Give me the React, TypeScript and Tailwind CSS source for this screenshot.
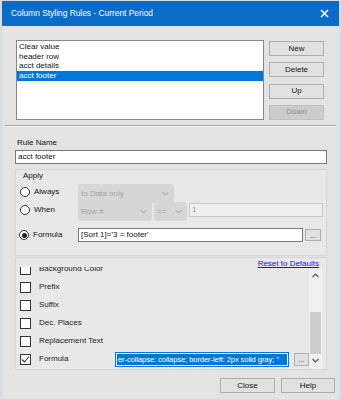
import React from "react";

const F = { fontFamily: '"Liberation Sans", Arial, sans-serif' };

function Btn({ label, disabled, w = "w-[55px]" }: { label: string; disabled?: boolean; w?: string }) {
  return (
    <div
      className={`${w} h-[15px] flex items-center justify-center text-[8px] border ${
        disabled ? "bg-[#cccccc] border-[#bfbfbf] text-[#8a8a8a]" : "bg-[#e1e1e1] border-[#adadad] text-[#111]"
      }`}
    >
      {label}
    </div>
  );
}

function Radio({ checked }: { checked?: boolean }) {
  return (
    <div className="w-[10px] h-[10px] rounded-full border border-[#333] bg-white flex items-center justify-center shrink-0">
      {checked && <div className="w-[5px] h-[5px] rounded-full bg-[#222]" />}
    </div>
  );
}

function Check({ checked }: { checked?: boolean }) {
  return (
    <div className="w-[11px] h-[11px] border border-[#333] bg-white flex items-center justify-center shrink-0">
      {checked && (
        <svg width="9" height="9" viewBox="0 0 9 9">
          <path d="M1 4.5 L3.5 7 L8 1.5" fill="none" stroke="#333" strokeWidth="1.1" />
        </svg>
      )}
    </div>
  );
}

function Chevron() {
  return (
    <svg width="7" height="5" viewBox="0 0 7 5">
      <path d="M0.5 1 L3.5 4 L6.5 1" fill="none" stroke="#9a9a9a" strokeWidth="1" />
    </svg>
  );
}

function Combo({ label, w }: { label: string; w: string }) {
  return (
    <div className={`${w} h-[19px] rounded-[3px] bg-[#d6d6d6] flex items-center justify-between pl-[3px] pr-[5px] text-[8px] text-[#a3a3a3]`}>
      <span>{label}</span>
      <Chevron />
    </div>
  );
}

function CheckRow({ label, checked, children }: { label: string; checked?: boolean; children?: React.ReactNode }) {
  return (
    <div className="h-[18px] flex items-center">
      <div className="w-[21px] pl-[4px] flex items-center">
        <Check checked={checked} />
      </div>
      <span className="text-[8px] text-[#222] ml-[2px] w-[76px] whitespace-nowrap">{label}</span>
      {children}
    </div>
  );
}

export default function App() {
  return (
    <div style={F} className="w-[341px] h-[400px] bg-[#d4dbe3] p-[1px] flex flex-col overflow-hidden">
      <div className="h-[25px] mx-[1px] bg-[#0b6cc7] flex items-center justify-between pl-[9px] pr-[10px]">
        <span className="text-white text-[8.4px]">Column Styling Rules - Current Period</span>
        <svg width="9" height="9" viewBox="0 0 9 9">
          <path d="M1 1 L8 8 M8 1 L1 8" stroke="white" strokeWidth="1.6" />
        </svg>
      </div>
      <div className="flex-1 bg-[#e3e3e3] mx-[1px] flex flex-col">
        {/* top list section */}
        <div className="flex pt-[14px] pl-[14px]">
          <div className="w-[248px] h-[80px] bg-white border border-[#828790] text-[8px] text-[#111] pt-[1px]">
            <div className="h-[9.7px] leading-[9.7px] pl-[2px]">Clear value</div>
            <div className="h-[9.7px] leading-[9.7px] pl-[2px]">header row</div>
            <div className="h-[9.7px] leading-[9.7px] pl-[2px]">acct details</div>
            <div className="h-[9.7px] leading-[9.7px] pl-[2px] bg-[#0078d7] text-white">acct footer</div>
          </div>
          <div className="ml-[5px] flex flex-col gap-[6.3px] pt-[1px]">
            <Btn label="New" />
            <Btn label="Delete" />
            <Btn label="Up" />
            <Btn label="Down" disabled />
          </div>
        </div>
        {/* separator */}
        <div className="mx-[3px] mt-[5px] border-t border-[#a5a5a5] border-b border-b-[#f7f7f7]" />
        {/* rule name */}
        <div className="pl-[13px] pr-[12px] mt-[11px]">
          <div className="text-[8px] text-[#111] pl-[2px] h-[10px] leading-[10px]">Rule Name</div>
          <div className="mt-[2px] h-[14px] bg-white border border-[#7a7a7a] text-[8px] text-[#111] flex items-center pl-[2px]">
            acct footer
          </div>
        </div>
        {/* apply group */}
        <div className="ml-[13px] mr-[12px] mt-[5px] h-[87px] border border-[#d6d6d6] bg-[#e8e8e8]">
          <div className="text-[8px] text-[#111] pl-[7px] pt-[1px] h-[11px] leading-[10px]">Apply</div>
          <div className="flex">
            <div className="flex flex-col w-[62px] pl-[4px]">
              <div className="h-[18px] flex items-center mt-[2px]">
                <Radio />
                <span className="text-[8px] text-[#111] ml-[4px]">Always</span>
              </div>
              <div className="h-[17px] flex items-center">
                <Radio />
                <span className="text-[8px] text-[#111] ml-[4px]">When</span>
              </div>
            </div>
            <div className="flex flex-col pt-[3px]">
              <Combo label="to Data only" w="w-[96px]" />
              <div className="flex items-start gap-[2px] -mt-[1px]">
                <Combo label="Row #" w="w-[74px]" />
                <Combo label="==" w="w-[33px]" />
                <div className="w-[134px] h-[14px] mt-[1px] bg-[#efefef] border border-[#c8c8c8] text-[8px] text-[#9a9a9a] flex items-center pl-[2px]">
                  1
                </div>
              </div>
            </div>
          </div>
          <div className="flex items-center mt-[7px] pl-[3px]">
            <div className="w-[59px] flex items-center">
              <Radio checked />
              <span className="text-[8px] text-[#111] ml-[4px]">Formula</span>
            </div>
            <div className="w-[225px] h-[14px] bg-white border border-[#7a7a7a] text-[8px] text-[#111] flex items-center pl-[2px]">
              [Sort 1]='3 = footer'
            </div>
            <div className="ml-[2px] w-[16px] h-[12px] bg-[#e1e1e1] border border-[#adadad] text-[7px] text-[#333] flex items-end justify-center leading-[9px]">
              ...
            </div>
          </div>
        </div>
        {/* styling list */}
        <div className="ml-[13px] mr-[12px] mt-[1px] h-[113px] border border-[#d6d6d6] bg-[#e8e8e8] flex flex-col">
          <div className="h-[9px] flex justify-end pr-[7px] pt-[1px]">
            <span className="text-[8px] leading-[10px] text-[#1a0dff] underline">Reset to Defaults</span>
          </div>
          <div className="flex flex-1 min-h-0">
            <div className="flex-1 overflow-hidden">
              <div className="-mt-[7px]">
                <CheckRow label="Background Color" />
                <CheckRow label="Prefix" />
                <CheckRow label="Suffix" />
                <CheckRow label="Dec. Places" />
                <CheckRow label="Replacement Text" />
                <CheckRow label="Formula" checked>
                  <div className="w-[174px] h-[15px] border border-[#0078d7] bg-white p-[1px] flex">
                    <div className="flex-1 bg-[#0078d7] text-white text-[7.6px] tracking-[-0.1px] leading-[11px] whitespace-nowrap overflow-hidden pl-[1px]">
                      er-collapse: collapse; border-left: 2px solid gray; "
                    </div>
                  </div>
                  <div className="ml-[5px] w-[15px] h-[13px] bg-[#e1e1e1] border border-[#adadad] text-[7px] text-[#333] flex items-end justify-center leading-[10px]">
                    ...
                  </div>
                </CheckRow>
              </div>
            </div>
            <div className="w-[13px] mr-[4px] mt-[2px] bg-[#f0f0f0] flex flex-col items-center">
              <div className="h-[13px] flex items-center justify-center">
                <svg width="7" height="5" viewBox="0 0 7 5">
                  <path d="M0.5 4 L3.5 1 L6.5 4" fill="none" stroke="#555" strokeWidth="1.1" />
                </svg>
              </div>
              <div className="mt-[30px] w-[11px] h-[42px] bg-[#cdcdcd]" />
              <div className="h-[13px] flex items-center justify-center">
                <svg width="7" height="5" viewBox="0 0 7 5">
                  <path d="M0.5 1 L3.5 4 L6.5 1" fill="none" stroke="#555" strokeWidth="1.1" />
                </svg>
              </div>
            </div>
          </div>
        </div>
        {/* bottom buttons */}
        <div className="flex justify-end gap-[6px] pr-[4px] mt-[8px]">
          <Btn label="Close" w="w-[55px]" />
          <Btn label="Help" w="w-[54px]" />
        </div>
      </div>
    </div>
  );
}
